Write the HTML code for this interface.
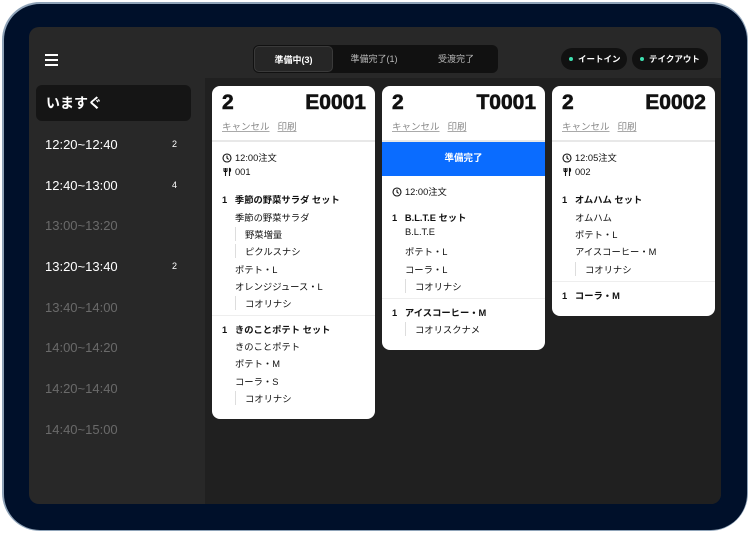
<!DOCTYPE html>
<html><head><meta charset="utf-8"><style>
*{margin:0;padding:0;box-sizing:border-box}
body{width:750px;height:534px;background:#fff;position:relative;overflow:hidden;font-family:"Liberation Sans","Noto Sans CJK JP",sans-serif}
.dev{position:absolute;left:2px;top:2px;width:746px;height:529px;border-radius:38px;background:#8fa3b8;}
.dev2{position:absolute;left:3.5px;top:3.5px;width:743px;height:526px;border-radius:36px;background:#00102a;}
.scr{position:absolute;left:29px;top:27px;width:692px;height:477px;border-radius:10px;background:#282828;overflow:hidden}
.main{position:absolute;left:176px;top:51px;width:516px;height:426px;background:#202020}
.ham{position:absolute;left:16px;top:27px;width:13px}
.ham i{display:block;height:1.5px;background:#fff;margin-bottom:3.5px}
.now{position:absolute;left:7px;top:58px;width:155px;height:36px;background:#151515;border-radius:6px;color:#fff;font-weight:bold;font-size:14px;line-height:36px;padding-left:10px}
.t{position:absolute;left:16px;font-size:13px;color:#fff}
.t.d{color:#6a6a6a}
.t b{position:absolute;left:127px;top:2px;font-size:9px;font-weight:normal}
.tabs{position:absolute;left:224px;top:18px;width:245px;height:28px;background:#111;border-radius:6px;font-size:9px;color:#bbb}
.tabs span{position:absolute;top:0;line-height:28px;text-align:center}
.tabs .a{left:1px;top:1px;width:79px;height:26px;line-height:26px;background:#262626;border:1px solid #3a3a3a;border-radius:5px;color:#fff;font-weight:bold}
.pill{position:absolute;top:21px;height:22px;border-radius:11px;background:#111;color:#fff;font-size:8.5px;font-weight:bold;line-height:22px;padding-left:17px}
.pill:before{content:"";position:absolute;left:8px;top:9px;width:4px;height:4px;border-radius:2px;background:#3ee0b0}
.card{position:absolute;top:86px;width:163px;background:#fff;border-radius:8px;overflow:hidden;color:#111}
.card .n,.card .id{position:absolute;top:5px;font-family:"Liberation Sans",sans-serif;font-size:21px;font-weight:700;-webkit-text-stroke:0.6px #111}
.card .n{left:10px}
.card .id{right:9px}
.card .lk{position:absolute;left:10px;top:33px;font-size:9.5px;color:#888}
.card .lk u{margin-right:8px;text-decoration-color:#aaa}
.card .dv{position:absolute;left:0;top:54px;width:100%;height:2px;background:#e8e8e8}
.ln{position:absolute;font-size:9.3px;white-space:nowrap}
.ln.b{font-weight:bold}
.ln svg{vertical-align:-2px;margin-right:3px}
.sub{border-left:1px solid #ddd;padding-left:9px}
.sep{position:absolute;left:0;width:100%;height:1px;background:#eee}
.blue{position:absolute;left:0;top:56px;width:100%;height:34px;background:#0a6cff;color:#fff;font-size:9.5px;font-weight:bold;text-align:center;line-height:34px}
</style></head><body>
<div class="dev"></div><div class="dev2"></div>
<div class="scr">
 <div class="ham"><i></i><i></i><i></i></div>
 <div class="now">いますぐ</div>
 <div class="t" style="top:110px">12:20~12:40<b>2</b></div>
 <div class="t" style="top:151px">12:40~13:00<b>4</b></div>
 <div class="t d" style="top:191px">13:00~13:20</div>
 <div class="t" style="top:232px">13:20~13:40<b>2</b></div>
 <div class="t d" style="top:273px">13:40~14:00</div>
 <div class="t d" style="top:313px">14:00~14:20</div>
 <div class="t d" style="top:354px">14:20~14:40</div>
 <div class="t d" style="top:395px">14:40~15:00</div>
 <div class="tabs"><span class="a">準備中(3)</span><span style="left:80px;width:82px">準備完了(1)</span><span style="left:162px;width:82px">受渡完了</span></div>
 <div class="pill" style="left:532px;width:66px">イートイン</div>
 <div class="pill" style="left:603px;width:76px">テイクアウト</div>
 <div class="main"></div>
</div>

<div class="card" style="left:212px;height:333px">
 <div class="n">2</div><div class="id">E0001</div>
 <div class="lk"><u>キャンセル</u><u>印刷</u></div><div class="dv"></div>
 <div class="ln" style="left:10px;top:64px"><svg width="10" height="10" viewBox="0 0 10 10"><circle cx="5" cy="5" r="4" fill="none" stroke="#111" stroke-width="1.1"/><path d="M5 2.6V5l1.6 1.4" fill="none" stroke="#111" stroke-width="1.1"/></svg>12:00注文</div>
 <div class="ln" style="left:10px;top:81px"><svg width="10" height="10" viewBox="0 0 10 10"><path d="M2 1v3.5M3.5 1v8M5 1v3.5M2 4.5h3M7.5 1v8M7.5 1c1.5 1 1.5 3 0 4" fill="none" stroke="#111" stroke-width="1.1"/></svg>001</div>
 <div class="ln b" style="left:10px;top:106px">1&nbsp;&nbsp; 季節の野菜サラダ セット</div>
 <div class="ln" style="left:23px;top:124px">季節の野菜サラダ</div>
 <div class="ln sub" style="left:23px;top:141px">野菜増量</div>
 <div class="ln sub" style="left:23px;top:158px">ピクルスナシ</div>
 <div class="ln" style="left:23px;top:176px">ポテト・L</div>
 <div class="ln" style="left:23px;top:193px">オレンジジュース・L</div>
 <div class="ln sub" style="left:23px;top:210px">コオリナシ</div>
 <div class="sep" style="top:229px"></div>
 <div class="ln b" style="left:10px;top:236px">1&nbsp;&nbsp; きのことポテト セット</div>
 <div class="ln" style="left:23px;top:253px">きのことポテト</div>
 <div class="ln" style="left:23px;top:270px">ポテト・M</div>
 <div class="ln" style="left:23px;top:288px">コーラ・S</div>
 <div class="ln sub" style="left:23px;top:305px">コオリナシ</div>
</div>

<div class="card" style="left:382px;height:264px">
 <div class="n">2</div><div class="id">T0001</div>
 <div class="lk"><u>キャンセル</u><u>印刷</u></div><div class="dv"></div>
 <div class="blue">準備完了</div>
 <div class="ln" style="left:10px;top:98px"><svg width="10" height="10" viewBox="0 0 10 10"><circle cx="5" cy="5" r="4" fill="none" stroke="#111" stroke-width="1.1"/><path d="M5 2.6V5l1.6 1.4" fill="none" stroke="#111" stroke-width="1.1"/></svg>12:00注文</div>
 <div class="ln b" style="left:10px;top:124px">1&nbsp;&nbsp; B.L.T.E セット</div>
 <div class="ln" style="left:23px;top:141px">B.L.T.E</div>
 <div class="ln" style="left:23px;top:158px">ポテト・L</div>
 <div class="ln" style="left:23px;top:176px">コーラ・L</div>
 <div class="ln sub" style="left:23px;top:193px">コオリナシ</div>
 <div class="sep" style="top:212px"></div>
 <div class="ln b" style="left:10px;top:219px">1&nbsp;&nbsp; アイスコーヒー・M</div>
 <div class="ln sub" style="left:23px;top:236px">コオリスクナメ</div>
</div>

<div class="card" style="left:552px;height:230px">
 <div class="n">2</div><div class="id">E0002</div>
 <div class="lk"><u>キャンセル</u><u>印刷</u></div><div class="dv"></div>
 <div class="ln" style="left:10px;top:64px"><svg width="10" height="10" viewBox="0 0 10 10"><circle cx="5" cy="5" r="4" fill="none" stroke="#111" stroke-width="1.1"/><path d="M5 2.6V5l1.6 1.4" fill="none" stroke="#111" stroke-width="1.1"/></svg>12:05注文</div>
 <div class="ln" style="left:10px;top:81px"><svg width="10" height="10" viewBox="0 0 10 10"><path d="M2 1v3.5M3.5 1v8M5 1v3.5M2 4.5h3M7.5 1v8M7.5 1c1.5 1 1.5 3 0 4" fill="none" stroke="#111" stroke-width="1.1"/></svg>002</div>
 <div class="ln b" style="left:10px;top:106px">1&nbsp;&nbsp; オムハム セット</div>
 <div class="ln" style="left:23px;top:124px">オムハム</div>
 <div class="ln" style="left:23px;top:141px">ポテト・L</div>
 <div class="ln" style="left:23px;top:158px">アイスコーヒー・M</div>
 <div class="ln sub" style="left:23px;top:176px">コオリナシ</div>
 <div class="sep" style="top:195px"></div>
 <div class="ln b" style="left:10px;top:202px">1&nbsp;&nbsp; コーラ・M</div>
</div>
</body></html>
